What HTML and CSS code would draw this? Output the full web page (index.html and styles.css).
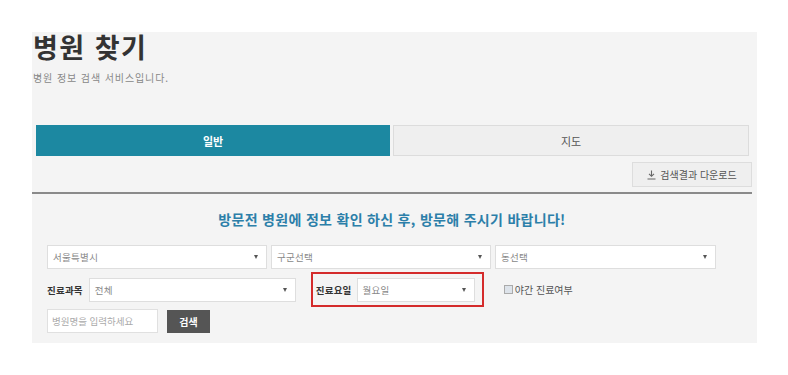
FILE: index.html
```html
<!DOCTYPE html>
<html lang="ko">
<head>
<meta charset="utf-8">
<link rel="stylesheet" href="styles.css">
</head>
<body>
<div class="panel">
  <h1 class="title">병원 찾기</h1>
  <p class="subtitle">병원 정보 검색 서비스입니다.</p>
  <div class="tabs">
    <div class="tab tab-active">일반</div>
    <div class="tab">지도</div>
  </div>
  <div class="toolbar">
    <div class="dl-btn">
      <svg class="dl-icon" width="9" height="10" viewBox="0 0 9 10"><path d="M4.5 0.5v5.5M2 3.8l2.5 2.5 2.5-2.5M0.5 9h8" fill="none" stroke="#666" stroke-width="1.1"/></svg>
      <span>검색결과 다운로드</span>
    </div>
  </div>
  <div class="divider"></div>
  <h2 class="notice">방문전 병원에 정보 확인 하신 후, 방문해 주시기 바랍니다!</h2>
  <div class="row row1">
    <div class="select w220"><span>서울특별시</span><span class="arrow"></span></div>
    <div class="select w220"><span>구군선택</span><span class="arrow"></span></div>
    <div class="select w221"><span>동선택</span><span class="arrow"></span></div>
  </div>
  <div class="row row2">
    <span class="label">진료과목</span>
    <div class="select w207"><span>전체</span><span class="arrow"></span></div>
    <div class="highlight">
      <span class="label">진료요일</span>
      <div class="select w118"><span>월요일</span><span class="arrow"></span></div>
    </div>
    <label class="check"><span class="box"></span><span>야간 진료여부</span></label>
  </div>
  <div class="row row3">
    <div class="input">병원명을 입력하세요</div>
    <div class="search-btn">검색</div>
  </div>
</div>
</body>
</html>
```
FILE: styles.css
```css
* { box-sizing: border-box; }
html, body { margin: 0; padding: 0; background: #fff; }
body { font-family: "Noto Sans CJK KR", "Noto Sans", sans-serif; color: #333; }

.panel {
  margin: 32px 0 0 32px;
  width: 725px;
  height: 311px;
  background: #f4f4f4;
}

.title {
  margin: 0 0 0 1px;
  font-size: 27px;
  line-height: 30px;
  font-weight: 700;
  color: #333;
  letter-spacing: 1.5px;
}

.subtitle {
  margin: 9px 0 0 1px;
  font-size: 10px;
  line-height: 14px;
  color: #888;
  letter-spacing: 0.9px;
}

.tabs {
  display: flex;
  margin: 40px 0 0 4px;
  width: 713px;
  height: 31px;
}
.tab {
  flex: 1;
  display: flex;
  align-items: center;
  justify-content: center;
  font-size: 11px;
  color: #555;
  background: #efefef;
  border: 1px solid #dcdcdc;
  margin-left: 3px;
}
.tab-active {
  background: #1c88a1;
  color: #fff;
  font-weight: 700;
  border-color: #1c88a1;
  margin-left: 0;
  flex: 0 0 354px;
}

.toolbar {
  display: flex;
  justify-content: flex-end;
  width: 720px;
  margin-top: 6px;
}
.dl-btn {
  display: flex;
  align-items: center;
  justify-content: center;
  gap: 4px;
  width: 120px;
  height: 25px;
  background: #efefef;
  border: 1px solid #ddd;
  font-size: 10px;
  color: #555;
}
.dl-icon { display: block; }

.divider {
  width: 720px;
  height: 2px;
  background: #8a8a8a;
  margin-top: 5px;
}

.notice {
  margin: 16px 0 0 0;
  width: 720px;
  text-align: center;
  font-size: 14px;
  line-height: 18px;
  font-weight: 700;
  color: #2c7fa9;
  letter-spacing: 0.3px;
}

.row { display: flex; align-items: center; margin-left: 15px; }
.row1 { margin-top: 17px; gap: 4px; }
.row2 { margin-top: 3px; }
.row3 { margin-top: 2px; }

.select {
  flex-shrink: 0;
  display: flex;
  align-items: center;
  justify-content: space-between;
  height: 24px;
  padding: 0 8px 0 5px;
  background: #fff;
  border: 1px solid #dedede;
  font-size: 9.5px;
  color: #888;
  letter-spacing: 0.3px;
}
.select .arrow {
  width: 0;
  height: 0;
  border-left: 2.5px solid transparent;
  border-right: 2.5px solid transparent;
  border-top: 4px solid #555;
}
.w220 { width: 220px; }
.w221 { width: 221px; }
.w207 { width: 207px; }
.w118 { width: 118px; }

.label {
  flex-shrink: 0;
  white-space: nowrap;
  font-size: 9.5px;
  font-weight: 700;
  color: #333;
  margin-right: 6px;
  letter-spacing: 0.2px;
}

.highlight {
  flex-shrink: 0;
  display: flex;
  align-items: center;
  height: 35px;
  width: 173px;
  margin-left: 15px;
  padding: 0 5px 0 3px;
  border: 2px solid #d42b2b;
}
.highlight .label { margin-right: 5px; }

.check {
  display: flex;
  align-items: center;
  gap: 2px;
  margin-left: 20px;
  font-size: 10px;
  color: #555;
  white-space: nowrap;
}
.check .box {
  width: 9px;
  height: 9px;
  border: 1px solid #aaa;
  background: #dde3ea;
}

.input {
  display: flex;
  align-items: center;
  width: 111px;
  height: 24px;
  padding-left: 4px;
  background: #fff;
  border: 1px solid #e0e0e0;
  font-size: 9.5px;
  color: #aaa;
  white-space: nowrap;
}
.search-btn {
  display: flex;
  align-items: center;
  justify-content: center;
  width: 43px;
  height: 23px;
  margin-left: 9px;
  background: #555;
  color: #fff;
  font-size: 10px;
  font-weight: 700;
}
```
